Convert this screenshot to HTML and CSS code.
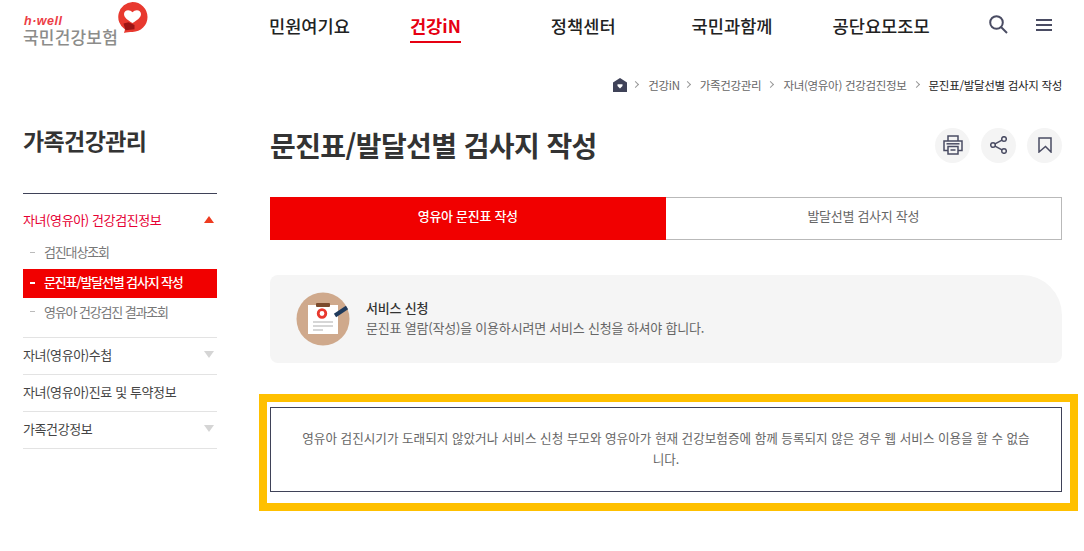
FILE: index.html
```html
<!DOCTYPE html>
<html lang="ko">
<head>
<meta charset="utf-8">
<title>문진표/발달선별 검사지 작성</title>
<link rel="stylesheet" href="styles.css">
</head>
<body>
<header class="header">
  <a class="logo">
    <span class="logo-text">
      <span class="logo-en">h·well</span>
      <span class="logo-ko">국민건강보험</span>
    </span>
    <svg class="logo-mark" width="31" height="31" viewBox="0 0 31 31">
      <path d="M15.500 0a15 15 0 0 1 0 30c-3 0-6 .3-8.500 1l1-3.500A15 15 0 0 1 15.500 0z" fill="#e8392f"/>
      <path d="M15.500 21c-5-3-8.500-5.500-8.500-9 0-4.500 6-5 8.500-1.700C18 7 24 7.500 24 12c0 3.500-3.500 6-8.500 9z" fill="#fff"/>
      <path d="M6.500 21.500l5-1.200 6 2.800v4.200l-9 1z" fill="#9c1414"/>
    </svg>
  </a>
  <nav class="gnb">
    <a>민원여기요</a>
    <a class="gnb-on">건강iN</a>
    <a class="gnb-third">정책센터</a>
    <a class="gnb-fourth">국민과함께</a>
    <a>공단요모조모</a>
  </nav>
  <div class="tools">
    <svg width="19" height="19" viewBox="0 0 19 19" fill="none" stroke="#4a4c63" stroke-width="2"><circle cx="7.500" cy="7.500" r="6.300"/><path d="M12 12l6 6"/></svg>
    <svg width="16" height="14" viewBox="0 0 16 14" fill="none" stroke="#4a4c63" stroke-width="2"><path d="M0 2h16M0 7h16M0 12h16"/></svg>
  </div>
</header>

<div class="crumbs">
  <svg class="home" width="14" height="14" viewBox="0 0 14 14"><path d="M0 4.500L7 0l7 4.500V14H0z" fill="#3f4258"/><path d="M7 10.500L4.500 8V6.300h5V8z" fill="#fff"/></svg>
  <i class="sep"></i><span class="crumb-first">건강iN</span>
  <i class="sep"></i><span>가족건강관리</span>
  <i class="sep"></i><span>자녀(영유아) 건강검진정보</span>
  <i class="sep"></i><span class="crumb-now">문진표/발달선별 검사지 작성</span>
</div>

<div class="page">
  <aside class="side">
    <h2 class="side-title">가족건강관리</h2>
    <ul class="menu">
      <li class="menu-item menu-open">
        <div class="menu-head"><span>자녀(영유아) 건강검진정보</span><i class="tri tri-up"></i></div>
        <ul class="sub">
          <li>검진대상조회</li>
          <li class="sub-on">문진표/발달선별 검사지 작성</li>
          <li class="sub-last">영유아 건강검진 결과조회</li>
        </ul>
      </li>
      <li class="menu-item"><div class="menu-head"><span>자녀(영유아)수첩</span><i class="tri tri-down"></i></div></li>
      <li class="menu-item"><div class="menu-head"><span>자녀(영유아)진료 및 투약정보</span></div></li>
      <li class="menu-item"><div class="menu-head"><span>가족건강정보</span><i class="tri tri-down"></i></div></li>
    </ul>
  </aside>

  <main class="main">
    <div class="title-row">
      <h1 class="title">문진표/발달선별 검사지 작성</h1>
      <div class="actions">
        <span class="act"><svg width="20" height="20" viewBox="0 0 20 20" fill="none" stroke="#4a4c63" stroke-width="1.500"><path d="M5 6V1h10v5"/><path d="M5 15.500H1V6h18v9.500h-4"/><path d="M5 11.500h10V19H5z"/><path d="M7.500 15h5"/><path d="M3.500 8.800h13"/></svg></span>
        <span class="act"><svg width="17" height="18" viewBox="0 0 17 18" fill="none" stroke="#4a4c63" stroke-width="1.500"><circle cx="3" cy="9" r="2.300"/><circle cx="14" cy="3" r="2.300"/><circle cx="14" cy="15" r="2.300"/><path d="M5 7.900l7-3.800M5 10.100l7 3.800"/></svg></span>
        <span class="act"><svg width="14" height="16" viewBox="0 0 14 16" fill="none" stroke="#4a4c63" stroke-width="1.500"><path d="M1 1h12v14L7.500 9.500 1 15z"/></svg></span>
      </div>
    </div>

    <div class="tabs">
      <a class="tab tab-on">영유아 문진표 작성</a>
      <a class="tab">발달선별 검사지 작성</a>
    </div>

    <section class="notice">
      <svg class="notice-icon" width="54" height="54" viewBox="0 0 54 54">
        <circle cx="27" cy="27" r="26.500" fill="#cfa98c"/>
        <rect x="12" y="13" width="30" height="29" fill="#fff"/>
        <rect x="20" y="11" width="14" height="4" rx="1" fill="#7b4a2c"/>
        <circle cx="26" cy="21.500" r="3.800" fill="none" stroke="#e8392f" stroke-width="2.800"/>
        <path d="M17 30h20M17 34h20M17 38h10" stroke="#c9c9c9" stroke-width="1.500"/>
        <path d="M39 23.500l12-8" stroke="#1f3a5c" stroke-width="4"/>
      </svg>
      <div class="notice-text">
        <strong>서비스 신청</strong>
        <p>문진표 열람(작성)을 이용하시려면 서비스 신청을 하셔야 합니다.</p>
      </div>
    </section>

    <div class="highlight">
      <div class="msg">영유아 검진시기가 도래되지 않았거나 서비스 신청 부모와 영유아가 현재 건강보험증에 함께 등록되지 않은 경우 웹 서비스 이용을 할 수 없습니다.</div>
    </div>
  </main>
</div>
</body>
</html>
```
FILE: styles.css
```css
* { box-sizing: border-box; }
html, body { margin: 0; padding: 0; }
body {
  width: 1084px;
  height: 551px;
  overflow: hidden;
  background: #fff;
  color: #333;
  font-family: "Noto Sans CJK KR", "Noto Sans", sans-serif;
  font-size: 13px;
}
ul { list-style: none; margin: 0; padding: 0; }
h1, h2, p { margin: 0; }

.header {
  height: 50px;
  display: flex;
  align-items: flex-start;
  padding-left: 23px;
}
.logo { width: 124px; display: flex; align-items: flex-start; flex: none; }
.logo-text { display: flex; flex-direction: column; padding-top: 15px; width: 94px; flex: none; }
.logo-en { color: #ec3d45; font: italic bold 12.500px/13px "Liberation Sans", sans-serif; letter-spacing: .5px; height: 13px; padding-left: 1px; }
.logo-ko { color: #8c8c8a; font-size: 17px; font-weight: 500; line-height: 17px; letter-spacing: .2px; white-space: nowrap; }
.logo-mark { margin-top: 2px; flex: none; }

.gnb {
  display: flex;
  gap: 60px;
  margin-left: 122px;
  font-size: 17.600px;
  font-weight: 500;
  line-height: 24px;
  padding-top: 14px;
  color: #222;
  white-space: nowrap;
}
.gnb a { display: block; height: 29px; }
.gnb .gnb-third { margin-left: 30px; }
.gnb .gnb-fourth { margin-left: 16px; }
.gnb .gnb-on { color: #e60012; border-bottom: 2px solid #e60012; font-weight: 700; }
.tools {
  margin-left: auto;
  padding: 15px 32px 0 0;
  display: flex;
  align-items: center;
  gap: 28px;
}

.crumbs {
  height: 21px;
  margin-top: 24px;
  padding-right: 22px;
  display: flex;
  justify-content: flex-end;
  align-items: center;
  font-size: 11.500px;
  letter-spacing: -.3px;
  color: #666;
  white-space: nowrap;
}
.crumb-now { color: #222; }
.crumb-first { margin-right: -2px; }
.sep {
  width: 5px; height: 5px;
  margin: 0 10px 0 7px;
  border-top: 1px solid #999;
  border-right: 1px solid #999;
  transform: rotate(45deg);
}
.home { flex: none; margin-right: -1px; }

.page {
  display: flex;
  padding: 0 22px 0 23px;
}
.side { width: 194px; flex: none; margin-right: 53px; }
.side-title {
  font-size: 23px;
  font-weight: 700;
  line-height: 32px;
  color: #333;
  margin-top: 29px;
  padding-bottom: 37px;
  border-bottom: 1px solid #3f4258;
  letter-spacing: -.6px;
}
.menu-item { border-bottom: 1px solid #e3e3e3; }
.menu-head {
  display: flex;
  justify-content: space-between;
  align-items: center;
  height: 36px;
  padding: 0 3px 3px 0;
  font-size: 13px;
  letter-spacing: -.4px;
  color: #444;
}
.menu-open { padding: 7px 0 9px; }
.menu-open .menu-head { color: #e60033; padding-bottom: 0; }
.tri { width: 0; height: 0; border-left: 5px solid transparent; border-right: 5px solid transparent; }
.tri-up { border-bottom: 7px solid #ee3a1f; }
.tri-down { border-top: 7px solid #d5d5d5; }
.sub { margin-top: 2px; }
.sub li {
  height: 30px;
  line-height: 26px;
  padding-left: 21px;
  font-size: 13px;
  letter-spacing: -1.150px;
  color: #777;
  position: relative;
}
.sub .sub-last { line-height: 28px; }
.sub li::before {
  content: "";
  position: absolute;
  left: 7px; top: 13px;
  width: 5px; height: 1px;
  background: #bbb;
}
.sub .sub-on { height: 29px; background: #f10000; color: #fff; font-weight: 500; }
.sub .sub-on::before { background: #fff; height: 2px; }

.main { flex: 1; min-width: 0; }
.title-row {
  display: flex;
  justify-content: space-between;
  align-items: center;
  height: 36px;
  margin-top: 32px;
}
.title { font-size: 28px; font-weight: 700; color: #333; line-height: 36px; letter-spacing: -.6px; white-space: nowrap; }
.actions { display: flex; gap: 11px; }
.act {
  width: 35px; height: 35px;
  border-radius: 50%;
  background: #f4f4f4;
  display: flex;
  align-items: center;
  justify-content: center;
}

.tabs { display: flex; margin-top: 34px; height: 43px; }
.tab {
  flex: 1;
  display: flex;
  align-items: center;
  justify-content: center;
  padding-bottom: 7px;
  border: 1px solid #b9b9b9;
  border-left: 0;
  color: #666;
  font-size: 13px;
  letter-spacing: -.3px;
}
.tab-on { background: #f10000; color: #fff; border: 0; font-weight: 500; }

.notice {
  margin-top: 35px;
  height: 88px;
  background: #f5f5f5;
  border-radius: 8px 40px 8px 8px;
  display: flex;
  align-items: center;
  padding-left: 26px;
}
.notice-icon { flex: none; margin-right: 16px; }
.notice-text { padding-bottom: 2px; }
.notice-text strong { display: block; font-size: 13px; font-weight: 500; color: #333; line-height: 20px; letter-spacing: -.2px; }
.notice-text p { font-size: 13px; color: #666; line-height: 20px; letter-spacing: -.2px; }

.highlight {
  margin: 31px -16px 0 -11px;
  height: 117px;
  border: 8px solid #ffc000;
  padding: 5px 8px 11px 3px;
}
.msg {
  height: 85px;
  border: 1px solid #3f4258;
  padding: 0 31px 4px;
  display: flex;
  align-items: center;
  text-align: center;
  font-size: 12.600px;
  line-height: 21px;
  color: #666;
}
```
